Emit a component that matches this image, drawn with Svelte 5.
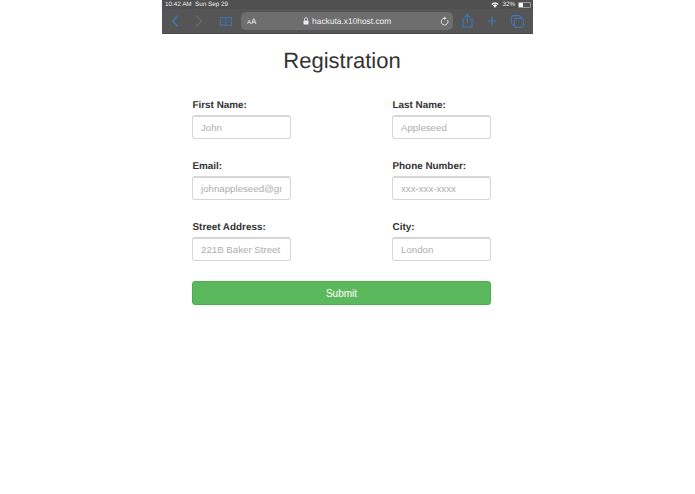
<script>
  const fields = [
    { label: "First Name:", placeholder: "John" },
    { label: "Last Name:", placeholder: "Appleseed" },
    { label: "Email:", placeholder: "johnappleseed@gmail.com" },
    { label: "Phone Number:", placeholder: "xxx-xxx-xxxx" },
    { label: "Street Address:", placeholder: "221B Baker Street" },
    { label: "City:", placeholder: "London" },
  ];
</script>

<div class="tablet">
  <header class="chrome">
    <div class="status">
      <span>10:42 AM&nbsp;&nbsp;Sun Sep 29</span>
      <div class="status-right">
        <svg width="8" height="6" viewBox="0 0 8 6">
          <path d="M0.3 2 A5 5 0 0 1 7.7 2 L6.8 2.9 A3.8 3.8 0 0 0 1.2 2.9 Z M1.8 3.5 A3 3 0 0 1 6.2 3.5 L4 5.8 Z" fill="#eee" />
        </svg>
        <span>32%</span>
        <div class="battery"><div class="level"></div></div>
      </div>
    </div>
    <div class="toolbar">
      <svg class="back" width="10" height="14" viewBox="0 0 10 14">
        <path d="M8 1.5 L2.5 7 L8 12.5" fill="none" stroke="#3d78b8" stroke-width="1.5" />
      </svg>
      <svg class="forward" width="10" height="14" viewBox="0 0 10 14">
        <path d="M2 1.5 L7.5 7 L2 12.5" fill="none" stroke="#686868" stroke-width="1.5" />
      </svg>
      <svg class="book" width="12" height="11" viewBox="0 0 13 11">
        <path d="M6.5 2 C5 0.8 2.5 0.8 0.7 1.2 V9.6 C2.5 9.2 5 9.2 6.5 10.2 C8 9.2 10.5 9.2 12.3 9.6 V1.2 C10.5 0.8 8 0.8 6.5 2 Z M6.5 2 V10.2" fill="none" stroke="#3d78b8" stroke-width="1.1" />
      </svg>
      <div class="address">
        <span class="aa"><small>A</small>A</span>
        <span class="url">
          <svg width="6" height="8" viewBox="0 0 6 8">
            <path d="M1.5 3.5 V2.2 A1.5 1.5 0 0 1 4.5 2.2 V3.5" fill="none" stroke="#eee" stroke-width="0.8" />
            <rect x="0.5" y="3.4" width="5" height="4" rx="0.6" fill="#eee" />
          </svg>
          hackuta.x10host.com
        </span>
        <svg width="9" height="10" viewBox="0 0 9 10">
          <path d="M7.6 4 A3.4 3.4 0 1 1 4.5 2.2" fill="none" stroke="#e6e6e6" stroke-width="0.9" />
          <path d="M4.2 0.4 L6.4 2.2 L4.2 3.9 Z" fill="#e6e6e6" />
        </svg>
      </div>
      <svg class="share" width="11" height="14" viewBox="0 0 11 14">
        <path d="M3.5 5 H1 V13 H10 V5 H7.5 M5.5 9 V1 M3 3 L5.5 0.8 L8 3" fill="none" stroke="#3d78b8" stroke-width="1.1" />
      </svg>
      <svg class="plus" width="10" height="10" viewBox="0 0 10 10">
        <path d="M5 0.5 V9.5 M0.5 5 H9.5" stroke="#3d78b8" stroke-width="1.2" />
      </svg>
      <svg class="tabs" width="13" height="13" viewBox="0 0 13 13">
        <rect x="0.6" y="0.6" width="9" height="9" rx="1.8" fill="none" stroke="#3d78b8" stroke-width="1.1" />
        <rect x="3.4" y="3.4" width="9" height="9" rx="1.8" fill="#555" stroke="#3d78b8" stroke-width="1.1" />
      </svg>
    </div>
  </header>

  <main class="content">
    <h1>Registration</h1>
    <form on:submit|preventDefault>
      <div class="grid">
        {#each fields as field}
          <label class="field">
            <span>{field.label}</span>
            <input type="text" placeholder={field.placeholder} />
          </label>
        {/each}
      </div>
      <button type="submit">Submit</button>
    </form>
  </main>
</div>

<style>
  :global(body) {
    margin: 0;
    background: #fff;
    font-family: "Liberation Sans", Arial, sans-serif;
    text-rendering: geometricPrecision;
  }

  .tablet {
    width: 371px;
    margin-left: 162px;
  }

  .chrome {
    background: #555;
    height: 33px;
    border-bottom: 1px solid #4a4a4a;
    color: #eee;
  }

  .status {
    display: flex;
    justify-content: space-between;
    align-items: center;
    height: 9px;
    padding: 0 2px 0 3px;
    font-size: 6.3px;
    background: #505050;
  }

  .status-right {
    display: flex;
    align-items: center;
    gap: 3px;
  }

  .battery {
    width: 11px;
    height: 4px;
    border: 1px solid #999;
    border-radius: 1px;
  }

  .level {
    width: 4px;
    height: 4px;
    background: #fff;
  }

  .toolbar {
    display: flex;
    align-items: center;
    height: 24px;
    padding-left: 8px;
  }

  .forward {
    margin-left: 14px;
  }

  .book {
    margin-left: 16px;
  }

  .address {
    display: flex;
    align-items: center;
    justify-content: space-between;
    width: 212px;
    height: 18px;
    margin-left: 9px;
    padding: 0 4px 0 6px;
    box-sizing: border-box;
    background: #6e6e6e;
    border-radius: 5px;
    font-size: 8.4px;
  }

  .aa {
    font-size: 8px;
  }

  .aa small {
    font-size: 6px;
  }

  .url {
    display: flex;
    align-items: center;
    gap: 3px;
    margin-right: 2px;
  }

  .share {
    margin-left: 9px;
  }

  .plus {
    margin-left: 14px;
  }

  .tabs {
    margin-left: 14px;
  }

  .content {
    padding: 0 41px 0 30px;
  }

  h1 {
    margin: 14px 0 0;
    height: 25px;
    line-height: 25px;
    font-size: 22px;
    font-weight: 400;
    color: #333;
    text-align: center;
  }

  form {
    margin-top: 27px;
  }

  .grid {
    display: grid;
    grid-template-columns: 200px 99px;
    row-gap: 22px;
  }

  .field {
    display: flex;
    flex-direction: column;
    gap: 3px;
    font-size: 9.9px;
    font-weight: 700;
    color: #333;
  }

  .field span {
    line-height: 12px;
    height: 12px;
    padding-left: 0.5px;
  }

  input {
    width: 99px;
    height: 24px;
    box-sizing: border-box;
    padding: 0 8px;
    border: 1px solid #d6d6d6;
    border-top: 2px solid #d6d6d6;
    border-radius: 3px;
    background: #fff;
    font-family: inherit;
    font-size: 9.7px;
    color: #555;
  }

  input::placeholder {
    color: #adadad;
  }

  button {
    display: block;
    width: 299px;
    height: 24px;
    margin-top: 20px;
    padding: 0;
    border: 1px solid #4cae4c;
    border-radius: 3px;
    background: #5cb85c;
    color: #fff;
    font-family: inherit;
    font-size: 10px;
  }
</style>
